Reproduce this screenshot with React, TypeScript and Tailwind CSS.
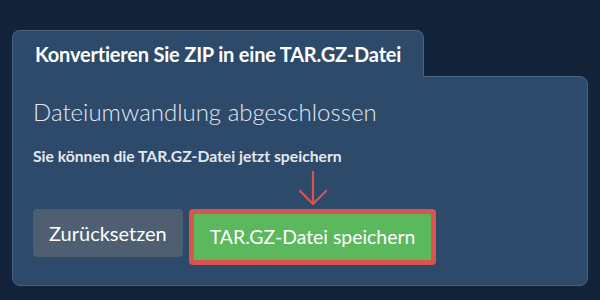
import { ReactNode } from "react";

function DownArrow() {
  return (
    <svg
      aria-hidden="true"
      className="absolute -top-[38px] left-1/2 -translate-x-1/2"
      fill="none"
      height="36"
      stroke="#d9534f"
      strokeLinecap="round"
      strokeLinejoin="round"
      strokeWidth="2.2"
      viewBox="0 0 30 36"
      width="30"
    >
      <path d="M15 1v32" />
      <path d="M2 20l13 13 13-13" />
    </svg>
  );
}

function ActionButton({
  children,
  className,
}: {
  children: ReactNode;
  className: string;
}) {
  return (
    <button
      className={`rounded-[4px] leading-none text-white ${className}`}
      type="button"
    >
      {children}
    </button>
  );
}

export default function App() {
  return (
    <div
      className="h-[300px] w-[600px] bg-[#12233a] pt-[30px] pl-[12px]"
      style={{ fontFamily: "Lato, 'Noto Sans', sans-serif" }}
    >
      <div className="w-[576px]">
        <div className="relative z-10 -mb-px inline-flex h-[47px] items-center rounded-t-lg border border-b-0 border-[#4a6383] bg-[#2d4a6a] px-[22px]">
          <h1 className="text-[20px] font-bold tracking-[-0.01em] text-white">
            Konvertieren Sie ZIP in eine TAR.GZ-Datei
          </h1>
        </div>
        <section className="rounded-b-lg rounded-tr-lg border border-[#4a6383] bg-[#2d4a6a] px-[20px] pt-[20px] pb-[20px]">
          <h2 className="text-[24px] leading-[30px] font-light text-[#e4e8ee]">
            Dateiumwandlung abgeschlossen
          </h2>
          <p className="mt-[20px] text-[15.7px] leading-[18px] font-bold text-[#e4e8ee]">
            Sie können die TAR.GZ-Datei jetzt speichern
          </p>
          <div className="mt-[44px] flex items-start gap-[6px]">
            <ActionButton className="h-[48px] bg-[#4e5f71] px-[16px] text-[20px]">
              Zurücksetzen
            </ActionButton>
            <div className="relative">
              <DownArrow />
              <ActionButton className="h-[56px] border-[5px] border-[#d9534f] bg-[#5cb85c] px-[16px] text-[19.4px]">
                TAR.GZ-Datei speichern
              </ActionButton>
            </div>
          </div>
        </section>
      </div>
    </div>
  );
}
